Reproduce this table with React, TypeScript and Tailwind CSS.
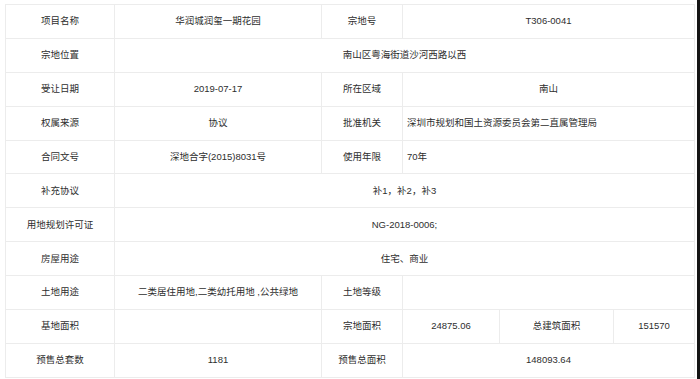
import React from 'react';

type Cell = { text?: string; span?: number; left?: boolean };

const rows: Cell[][] = [
  [{ text: '项目名称' }, { text: '华润城润玺一期花园' }, { text: '宗地号' }, { text: 'T306-0041', span: 3 }],
  [{ text: '宗地位置' }, { text: '南山区粤海街道沙河西路以西', span: 5 }],
  [{ text: '受让日期' }, { text: '2019-07-17' }, { text: '所在区域' }, { text: '南山', span: 3 }],
  [{ text: '权属来源' }, { text: '协议' }, { text: '批准机关' }, { text: '深圳市规划和国土资源委员会第二直属管理局', span: 3, left: true }],
  [{ text: '合同文号' }, { text: '深地合字(2015)8031号' }, { text: '使用年限' }, { text: '70年', span: 3, left: true }],
  [{ text: '补充协议' }, { text: '补1，补2，补3', span: 5 }],
  [{ text: '用地规划许可证' }, { text: 'NG-2018-0006;', span: 5 }],
  [{ text: '房屋用途' }, { text: '住宅、商业', span: 5 }],
  [{ text: '土地用途' }, { text: '二类居住用地,二类幼托用地 ,公共绿地' }, { text: '土地等级' }, { text: '', span: 3 }],
  [{ text: '基地面积' }, { text: '' }, { text: '宗地面积' }, { text: '24875.06' }, { text: '总建筑面积' }, { text: '151570' }],
  [{ text: '预售总套数' }, { text: '1181' }, { text: '预售总面积' }, { text: '148093.64', span: 3 }],
];

const spanClass: Record<number, string> = {
  1: 'col-span-1',
  3: 'col-span-3',
  5: 'col-span-5',
};

export default function App() {
  return (
    <div
      className="w-[700px] h-[379px] bg-white flex overflow-hidden text-[#2e2e2e] text-[9.5px]"
      style={{ fontFamily: '"Liberation Sans", "Noto Sans CJK SC", sans-serif' }}
    >
      <div className="pl-[5px] pt-[4px]">
        <div className="grid grid-cols-[109px_207px_81px_97px_114px_81px] auto-rows-[33.9px] border-t border-l border-[#ececec]">
          {rows.map((row, i) =>
            row.map((c, j) => (
              <div
                key={i + '-' + j}
                className={`${spanClass[c.span ?? 1]} flex items-center border-r border-b border-[#ececec] ${
                  c.left ? 'justify-start pl-[4px]' : 'justify-center'
                }`}
              >
                {c.text}
              </div>
            ))
          )}
        </div>
      </div>
      <div className="flex-1" />
      <div className="w-[3px] bg-[#141414]" />
    </div>
  );
}
